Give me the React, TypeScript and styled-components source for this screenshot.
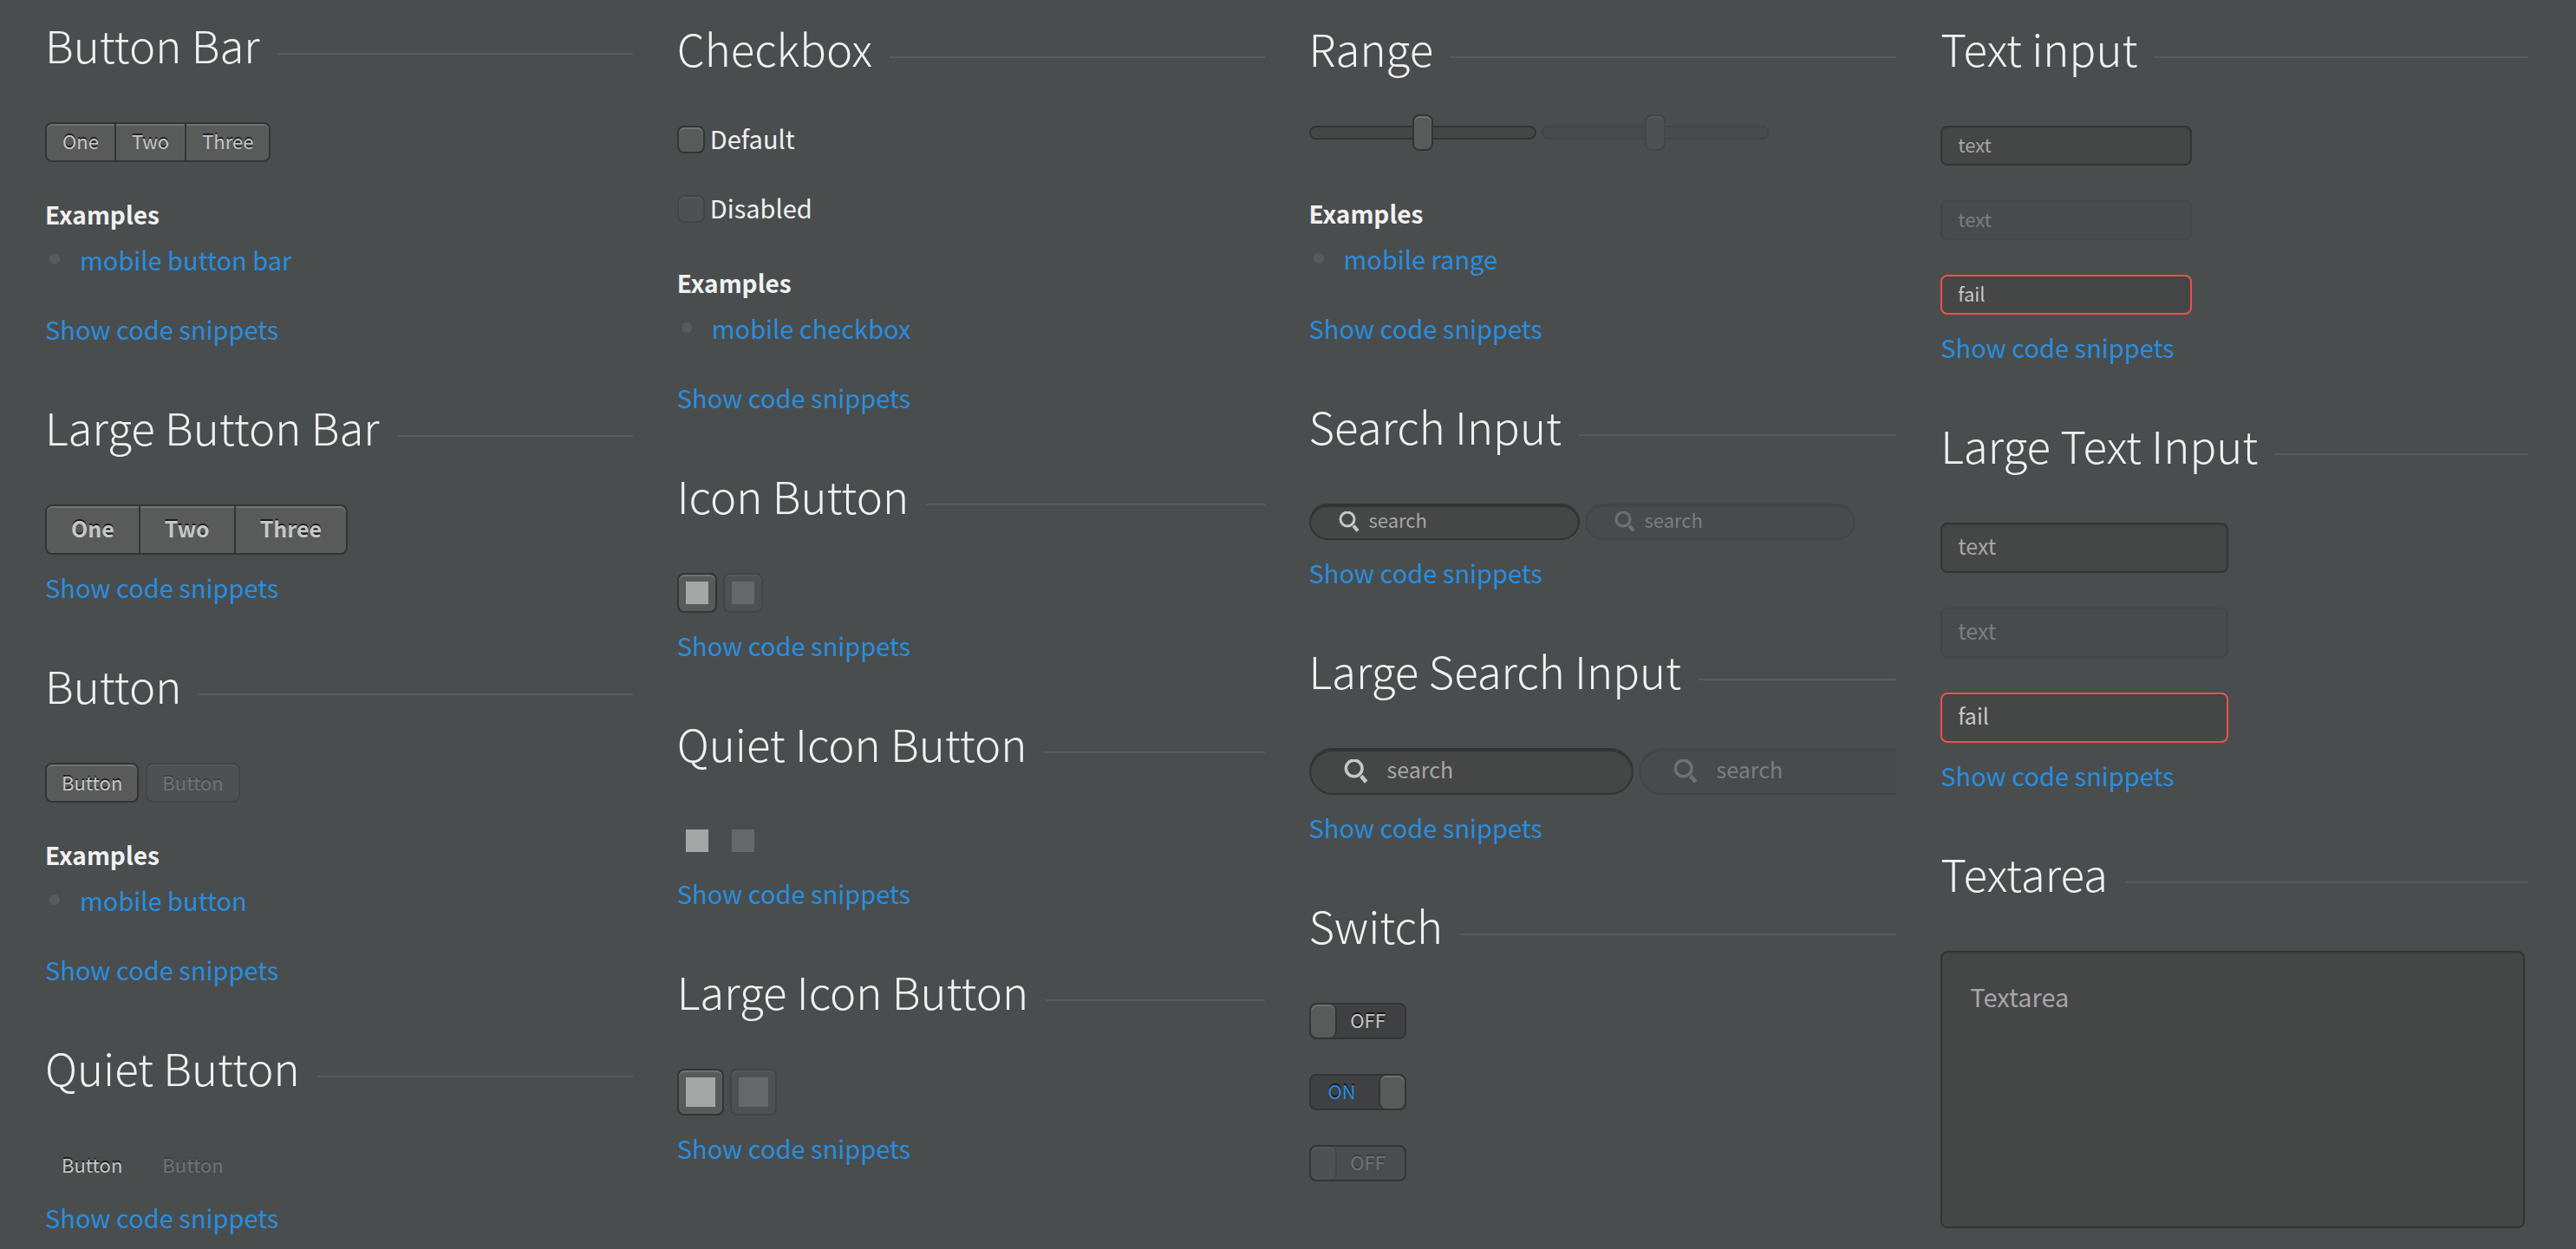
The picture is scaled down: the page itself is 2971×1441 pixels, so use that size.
import React from "react";
import styled, { createGlobalStyle, css } from "styled-components";

const color = {
  page: "#4a4d4e",
  text: "#f1f1f1",
  rule: "#595a5c",
  link: "#288edf",
  control: "#595b5b",
  edge: "#333434",
  shine: "#737373",
  field: "#454646",
  label: "#c6c8c8",
  hint: "#a5a7a7",
  well: "#3f4041",
  invalid: "#ec514e",
  fadedField: "#484b4c",
  fadedEdge: "#434546",
  fadedHint: "#7c7e7f",
};

const GlobalStyle = createGlobalStyle`
  *, *::before, *::after { box-sizing: border-box; }
  html { background: ${color.page}; }
  body {
    margin: 0;
    color: ${color.text};
    font-family: "Source Sans Pro", "Noto Sans CJK SC", sans-serif;
    font-size: 29px;
    line-height: 52px;
  }
  button, input, textarea { font: inherit; color: inherit; margin: 0; }
`;

const Page = styled.main`
  display: grid;
  grid-template-columns: repeat(4, minmax(0, 1fr));
  gap: 51px;
  padding: 15px 55px 15px 52px;
  overflow: hidden;
`;

const Column = styled.div<{ $lowered?: boolean }>`
  display: flex;
  flex-direction: column;
  gap: 51px;
  padding-top: ${(p) => (p.$lowered ? "4px" : "0")};
`;

const Section = styled.section`
  min-width: 0;
`;

const Title = styled.h2`
  display: flex;
  align-items: center;
  gap: 20px;
  margin: 0 0 54px;
  font-size: 51px;
  font-weight: 200;
  line-height: 72px;
  white-space: nowrap;

  &::after {
    content: "";
    flex: 1;
    height: 2px;
    margin-top: 22px;
    background: ${color.rule};
  }
`;

const Row = styled.div<{ $gap?: number }>`
  display: flex;
  gap: ${(p) => p.$gap ?? 6}px;
  overflow: hidden;
`;

const Stack = styled.div<{ $gap: number }>`
  display: flex;
  flex-direction: column;
  align-items: flex-start;
  gap: ${(p) => p.$gap}px;
`;

const CheckStack = styled(Stack)`
  padding-bottom: 9px;
`;

const Link = styled.a`
  color: ${color.link};
  text-decoration: none;
`;

const Snippets = styled.p<{ $afterList?: boolean }>`
  margin: ${(p) => (p.$afterList ? "28px" : "11px")} 0 0;
`;

const ExamplesTitle = styled.h3`
  margin: 34px 0 0;
  font-size: 28px;
  font-weight: 600;
  line-height: 52px;
`;

const ExampleList = styled.ul`
  list-style: none;
  margin: 0;
  padding: 0 0 0 5px;
`;

const ExampleItem = styled.li`
  display: flex;
  align-items: center;
  gap: 23px;

  &::before {
    content: "";
    width: 12px;
    height: 12px;
    border-radius: 50%;
    background: ${color.rule};
  }
`;

const raised = css`
  background: ${color.control};
  border: 2px solid ${color.edge};
  border-radius: 8px;
  box-shadow: inset 0 2px ${color.shine};
`;

const engraved = css`
  color: ${color.label};
  text-shadow: 0 -2px rgba(0, 0, 0, 0.69);
`;

const Button = styled.button<{ $quiet?: boolean }>`
  ${raised}
  ${engraved}
  height: 46px;
  padding: 0 17px 2px;
  font-size: 22px;
  line-height: 38px;
  ${(p) =>
    p.$quiet &&
    css`
      background: transparent;
      border-color: transparent;
      box-shadow: none;
    `}
  &:disabled {
    opacity: 0.3;
  }
`;

const IconButton = styled(Button)<{ $large?: boolean }>`
  width: ${(p) => (p.$large ? 54 : 46)}px;
  height: ${(p) => (p.$large ? 54 : 46)}px;
  padding: 8px;
`;

const Swatch = styled.span`
  display: block;
  height: 100%;
  background: #a5a7a7;
`;

const BarButton = styled.button<{ $large?: boolean }>`
  ${engraved}
  height: 100%;
  padding: 0 ${(p) => (p.$large ? 28 : 18)}px 4px;
  border: 0;
  border-left: 2px solid ${color.edge};
  background: transparent;
  font-size: ${(p) => (p.$large ? 25 : 22)}px;
  font-weight: ${(p) => (p.$large ? 600 : 400)};
  line-height: ${(p) => (p.$large ? 46 : 38)}px;

  &:first-child {
    border-left: 0;
  }
`;

const ButtonBar = styled.div<{ $large?: boolean }>`
  ${raised}
  display: inline-flex;
  height: ${(p) => (p.$large ? 58 : 46)}px;
`;

const CheckLabel = styled.label`
  display: flex;
  gap: 6px;
  height: 32px;
  line-height: 28px;
`;

const CheckInput = styled.input`
  ${raised}
  appearance: none;
  width: 32px;
  height: 32px;

  &:checked {
    background: ${color.link};
  }
  &:disabled {
    opacity: 0.3;
  }
`;

const RangeRow = styled(Row)`
  height: 41px;
  overflow: visible;
`;

const RangeInput = styled.input`
  appearance: none;
  width: 262px;
  height: 16px;
  background: ${color.field};
  border: 2px solid ${color.edge};
  border-radius: 8px;

  &::-webkit-slider-thumb {
    appearance: none;
    ${raised}
    box-sizing: border-box;
    width: 24px;
    height: 42px;
  }
  &:disabled {
    opacity: 0.3;
  }
`;

const field = css`
  background: ${color.field};
  border: 2px solid ${color.edge};
  color: ${color.label};
  outline: none;

  &::placeholder {
    color: ${color.hint};
    opacity: 1;
  }
`;

const fadedField = css`
  background: ${color.fadedField};
  border-color: ${color.fadedEdge};
`;

const TextInput = styled.input<{ $large?: boolean }>`
  ${field}
  width: ${(p) => (p.$large ? 332 : 290)}px;
  height: ${(p) => (p.$large ? 58 : 46)}px;
  padding: 0 18px ${(p) => (p.$large ? 6 : 4)}px;
  border-radius: 8px;
  box-shadow: inset 0 2px rgba(0, 0, 0, 0.05);
  font-size: ${(p) => (p.$large ? 25 : 22)}px;

  &:disabled {
    ${fadedField}
    box-shadow: none;
  }
  &:disabled::placeholder {
    color: ${color.fadedHint};
  }
  &[aria-invalid="true"] {
    border-color: ${color.invalid};
  }
`;

const SearchInput = styled.input`
  appearance: none;
  flex: 1;
  min-width: 0;
  height: 100%;
  padding: 0 0 6px;
  border: 0;
  outline: none;
  background: transparent;
  color: ${color.label};

  &::placeholder {
    color: ${color.hint};
    opacity: 1;
  }
  &:disabled::placeholder {
    color: ${color.fadedHint};
  }
`;

const SearchIcon = styled.svg`
  flex: none;
  width: 24px;
  height: 24px;
`;

const SearchBox = styled.label<{ $large?: boolean; $disabled?: boolean }>`
  ${field}
  display: flex;
  flex: none;
  align-items: center;
  gap: ${(p) => (p.$large ? 22 : 11)}px;
  width: ${(p) => (p.$large ? 374 : 312)}px;
  height: ${(p) => (p.$large ? 54 : 42)}px;
  padding: 0 30px 0 ${(p) => (p.$large ? 38 : 32)}px;
  border-radius: 30px;
  box-shadow: inset 0 2px ${(p) => (p.$disabled ? color.fadedEdge : color.edge)};
  font-size: ${(p) => (p.$large ? 25 : 22)}px;
  ${(p) => p.$disabled && fadedField}

  ${SearchIcon} {
    width: ${(p) => (p.$large ? 28 : 24)}px;
    height: ${(p) => (p.$large ? 28 : 24)}px;
    opacity: ${(p) => (p.$disabled ? 0.3 : 1)};
  }
`;

const SwitchTrack = styled.span`
  ${engraved}
  display: flex;
  align-items: center;
  width: 112px;
  height: 42px;
  border: 2px solid ${color.edge};
  border-radius: 8px;
  background: ${color.well};
  font-size: 22px;
  line-height: 34px;
`;

const SwitchThumb = styled.span`
  flex: none;
  width: 30px;
  height: 38px;
  border-right: 2px solid ${color.edge};
  border-radius: 8px;
  background: ${color.control};
  box-shadow: inset 0 2px ${color.shine};
`;

const SwitchText = styled.span`
  flex: 1;
  padding: 0 6px 4px 0;
  text-align: center;
`;

const SwitchInput = styled.input`
  position: absolute;
  opacity: 0;

  &:checked + ${SwitchTrack} {
    flex-direction: row-reverse;
    color: ${color.link};
  }
  &:checked + ${SwitchTrack} ${SwitchThumb} {
    border-right: 0;
    border-left: 2px solid ${color.edge};
  }
  &:disabled + ${SwitchTrack} {
    background: transparent;
  }
  &:disabled + ${SwitchTrack} > * {
    opacity: 0.3;
  }
`;

const SwitchLabel = styled.label`
  display: block;
`;

const TextAreaBox = styled.div`
  padding-right: 4px;
`;

const TextArea = styled.textarea`
  ${field}
  display: block;
  width: 100%;
  height: 320px;
  padding: 24px 32px;
  border-radius: 8px;
  box-shadow: inset 0 2px rgba(0, 0, 0, 0.05);
  resize: none;
`;

function SnippetLink({ afterList }: { afterList?: boolean }) {
  return (
    <Snippets $afterList={afterList}>
      <Link href="#snippets">Show code snippets</Link>
    </Snippets>
  );
}

function Examples({ name }: { name: string }) {
  return (
    <>
      <ExamplesTitle>Examples</ExamplesTitle>
      <ExampleList>
        <ExampleItem>
          <Link href="#example">{name}</Link>
        </ExampleItem>
      </ExampleList>
      <SnippetLink afterList />
    </>
  );
}

function Bar({ large }: { large?: boolean }) {
  return (
    <ButtonBar $large={large}>
      {["One", "Two", "Three"].map((label) => (
        <BarButton key={label} type="button" $large={large}>
          {label}
        </BarButton>
      ))}
    </ButtonBar>
  );
}

function ButtonPair({ quiet }: { quiet?: boolean }) {
  return (
    <Row $gap={8}>
      <Button type="button" $quiet={quiet}>
        Button
      </Button>
      <Button type="button" $quiet={quiet} disabled>
        Button
      </Button>
    </Row>
  );
}

function IconPair({ quiet, large }: { quiet?: boolean; large?: boolean }) {
  return (
    <Row $gap={7}>
      <IconButton type="button" aria-label="Icon" $quiet={quiet} $large={large}>
        <Swatch />
      </IconButton>
      <IconButton type="button" aria-label="Icon, disabled" $quiet={quiet} $large={large} disabled>
        <Swatch />
      </IconButton>
    </Row>
  );
}

function Search({ large, disabled }: { large?: boolean; disabled?: boolean }) {
  return (
    <SearchBox $large={large} $disabled={disabled}>
      <SearchIcon viewBox="0 0 24 24" fill="none" stroke={color.label} aria-hidden="true">
        <circle cx="10" cy="9" r="8" strokeWidth="3" />
        <path d="M17 16.5L22 22.5" strokeWidth="4" />
      </SearchIcon>
      <SearchInput type="search" placeholder="search" aria-label="Search" disabled={disabled} />
    </SearchBox>
  );
}

function TextInputs({ large }: { large?: boolean }) {
  return (
    <Stack $gap={40}>
      <TextInput type="text" placeholder="text" aria-label="Text" $large={large} />
      <TextInput type="text" placeholder="text" aria-label="Disabled text" $large={large} disabled />
      <TextInput type="text" defaultValue="fail" aria-label="Invalid text" aria-invalid="true" $large={large} />
    </Stack>
  );
}

function Switch({ on, disabled }: { on?: boolean; disabled?: boolean }) {
  const [checked, setChecked] = React.useState(Boolean(on));
  return (
    <SwitchLabel>
      <SwitchInput
        type="checkbox"
        role="switch"
        checked={checked}
        disabled={disabled}
        onChange={(e) => setChecked(e.target.checked)}
      />
      <SwitchTrack>
        <SwitchThumb />
        <SwitchText>{checked ? "ON" : "OFF"}</SwitchText>
      </SwitchTrack>
    </SwitchLabel>
  );
}

export default function App() {
  return (
    <>
      <GlobalStyle />
      <Page>
        <Column>
          <Section>
            <Title>Button Bar</Title>
            <Row>
              <Bar />
            </Row>
            <Examples name="mobile button bar" />
          </Section>
          <Section>
            <Title>Large Button Bar</Title>
            <Row>
              <Bar large />
            </Row>
            <SnippetLink />
          </Section>
          <Section>
            <Title>Button</Title>
            <ButtonPair />
            <Examples name="mobile button" />
          </Section>
          <Section>
            <Title>Quiet Button</Title>
            <ButtonPair quiet />
            <SnippetLink />
          </Section>
        </Column>

        <Column $lowered>
          <Section>
            <Title>Checkbox</Title>
            <CheckStack $gap={48}>
              <CheckLabel>
                <CheckInput type="checkbox" />
                Default
              </CheckLabel>
              <CheckLabel>
                <CheckInput type="checkbox" disabled />
                Disabled
              </CheckLabel>
            </CheckStack>
            <Examples name="mobile checkbox" />
          </Section>
          <Section>
            <Title>Icon Button</Title>
            <IconPair />
            <SnippetLink />
          </Section>
          <Section>
            <Title>Quiet Icon Button</Title>
            <IconPair quiet />
            <SnippetLink />
          </Section>
          <Section>
            <Title>Large Icon Button</Title>
            <IconPair large />
            <SnippetLink />
          </Section>
        </Column>

        <Column $lowered>
          <Section>
            <Title>Range</Title>
            <RangeRow>
              <RangeInput type="range" aria-label="Range" />
              <RangeInput type="range" aria-label="Disabled range" disabled />
            </RangeRow>
            <Examples name="mobile range" />
          </Section>
          <Section>
            <Title>Search Input</Title>
            <Row>
              <Search />
              <Search disabled />
            </Row>
            <SnippetLink />
          </Section>
          <Section>
            <Title>Large Search Input</Title>
            <Row>
              <Search large />
              <Search large disabled />
            </Row>
            <SnippetLink />
          </Section>
          <Section>
            <Title>Switch</Title>
            <Stack $gap={40}>
              <Switch />
              <Switch on />
              <Switch disabled />
            </Stack>
          </Section>
        </Column>

        <Column $lowered>
          <Section>
            <Title>Text input</Title>
            <TextInputs />
            <SnippetLink />
          </Section>
          <Section>
            <Title>Large Text Input</Title>
            <TextInputs large />
            <SnippetLink />
          </Section>
          <Section>
            <Title>Textarea</Title>
            <TextAreaBox>
              <TextArea placeholder="Textarea" aria-label="Textarea" />
            </TextAreaBox>
          </Section>
        </Column>
      </Page>
    </>
  );
}
